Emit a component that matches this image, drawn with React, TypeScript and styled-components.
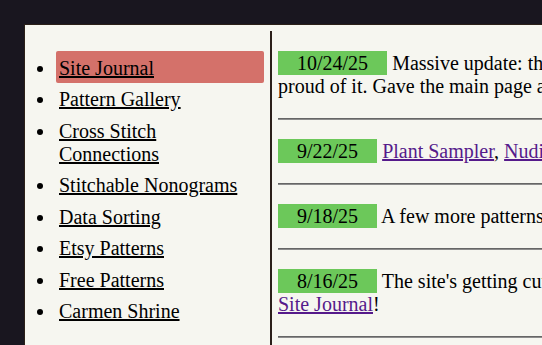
import styled, { createGlobalStyle } from "styled-components";

const GlobalStyle = createGlobalStyle`
  html, body {
    overflow: hidden;
  }
  body {
    margin: 0;
    padding: 24px;
    background-color: #19161f;
  }
`;

const navItems = [
  "Site Journal",
  "Pattern Gallery",
  "Cross Stitch Connections",
  "Stitchable Nonograms",
  "Data Sorting",
  "Etsy Patterns",
  "Free Patterns",
  "Carmen Shrine",
];

const App = () => {
  return (
    <>
      <GlobalStyle />
      <Page>
        <Sidebar>
          <NavList>
            {navItems.map((item, i) => (
              <NavItem key={item} $active={i === 0}>
                <NavLink href="#">{item}</NavLink>
              </NavItem>
            ))}
          </NavList>
        </Sidebar>
        <Main>
          <Entry>
            <DateTag>10/24/25</DateTag> Massive update: the whole site got a new look and
            I'm really proud of it. Gave the main page a makeover and tidied every gallery.
          </Entry>
          <Rule />
          <Entry>
            <DateTag>9/22/25</DateTag> <PostLink href="#">Plant Sampler</PostLink>,{" "}
            <PostLink href="#">Nudibranch Sampler</PostLink> added!
          </Entry>
          <Rule />
          <Entry>
            <DateTag>9/18/25</DateTag> A few more patterns added to the Free Patterns page.
          </Entry>
          <Rule />
          <Entry>
            <DateTag>8/16/25</DateTag> The site's getting cuter every day, so updates now
            live on the <PostLink href="#">Site Journal</PostLink>!
          </Entry>
          <Rule />
          <Entry>
            <DateTag>8/02/25</DateTag> Site opened!
          </Entry>
        </Main>
      </Page>
    </>
  );
};

const Page = styled.div`
  display: flex;
  width: 880px;
  min-height: 700px;
  padding-top: 6px;
  background-color: #f6f6f0;
  border: 1px solid #2b2018;
  font-family: "Liberation Serif", "Times New Roman", Times, serif;
  font-size: 20px;
  color: #000;
`;

const Sidebar = styled.nav`
  flex: 0 0 247px;
  padding-right: 6px;
  box-sizing: border-box;
  border-right: 2px solid #2b1f1a;
`;

const NavList = styled.ul`
  margin: 20px 0 0;
  padding-left: 31px;
  list-style: disc;
`;

const NavItem = styled.li<{ $active?: boolean }>`
  padding: 5.5px 3px 3px;
  line-height: 23px;
  border-radius: 2px;
  background-color: ${(p) => (p.$active ? "#d4716a" : "transparent")};
`;

const NavLink = styled.a`
  color: #000;
  text-decoration: underline;
`;

const Main = styled.main`
  width: 613px;
  padding: 0.5px 0 0 6px;
`;

const Entry = styled.p`
  margin: 20px 0;
  line-height: 23px;
`;

const DateTag = styled.span`
  padding: 1px 19px 1.5px;
  background-color: #6cc85a;
`;

const PostLink = styled.a`
  color: #551a8b;
`;

const Rule = styled.hr`
  margin: 10px 0;
  height: 0;
  border: none;
  border-top: 1px solid #666666;
  border-bottom: 1px solid #8c8c8c;
`;

export default App;
